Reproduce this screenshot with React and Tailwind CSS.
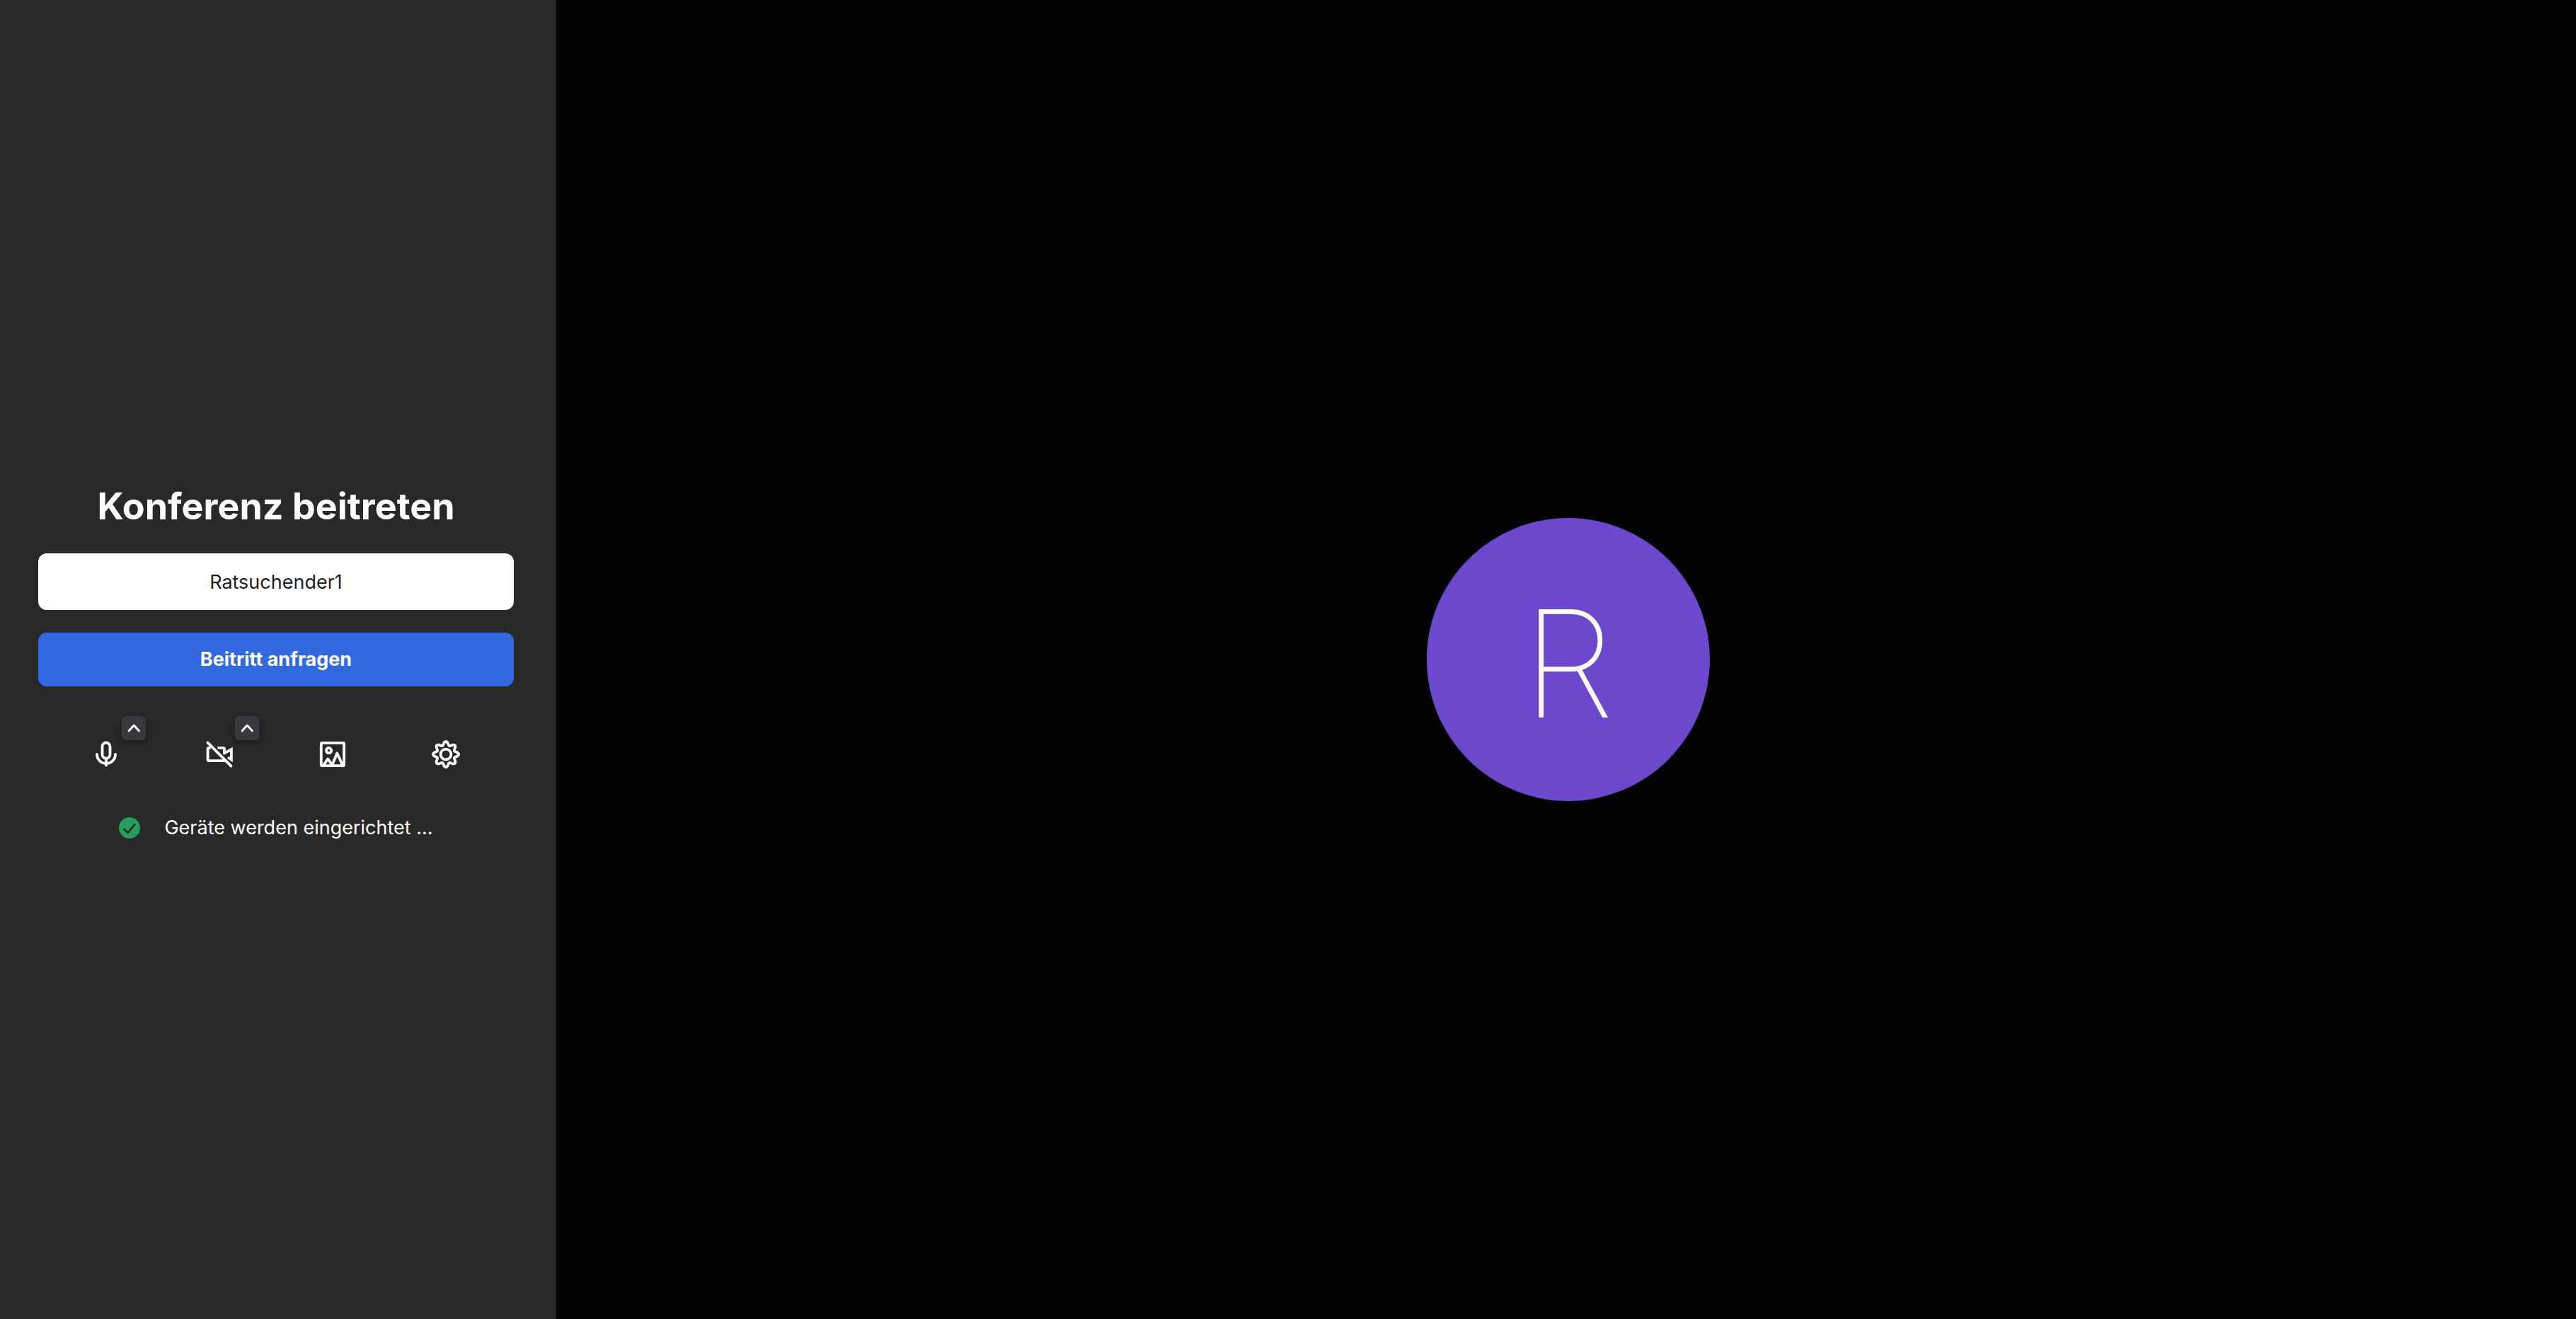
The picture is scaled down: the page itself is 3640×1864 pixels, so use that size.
const iconProps = {
  viewBox: '0 0 40 40',
  fill: 'none',
  stroke: 'currentColor',
  strokeWidth: 3.8,
  strokeLinecap: 'round',
  strokeLinejoin: 'round',
  className: 'size-10',
  'aria-hidden': true,
};

function MicIcon() {
  return (
    <svg {...iconProps}>
      <rect x="14.5" y="3.5" width="11" height="22.2" rx="5.5" />
      <path d="M7 20a13 13 0 0 0 26 0M20 26v9.5" />
    </svg>
  );
}

function CameraOffIcon() {
  return (
    <svg {...iconProps}>
      <path d="M6 10.9H5Q3.6 10.9 3.6 12.3V27.7Q3.6 29.1 5 29.1H25Q27 29.1 27.3 28" />
      <path d="M17.5 10.9H25.2Q27 10.9 27 12.5V18.4L36.9 13V27.6L32 24.2" strokeLinecap="butt" strokeLinejoin="miter" />
      <path d="M6.8 3L39.2 35.4" stroke="#292929" strokeWidth="2.6" strokeLinecap="butt" />
      <path d="M3.4 3.4L36.6 36.6" />
    </svg>
  );
}

function PictureIcon() {
  return (
    <svg {...iconProps}>
      <rect x="3.8" y="3.8" width="32.4" height="32.4" rx="1.4" />
      <circle cx="14.6" cy="14.6" r="3.6" />
      <path d="M7.5 35L13.2 26.5L19.5 35L26.3 18.5L34 35" />
    </svg>
  );
}

const gearPath =
  Array.from({ length: 144 }, (_, i) => {
    const angle = (i / 144) * Math.PI * 2;
    const radius = 15.5 + 2.6 * Math.cos(8 * angle);
    const x = (20 + radius * Math.cos(angle)).toFixed(2);
    const y = (20 + radius * Math.sin(angle)).toFixed(2);
    return `${i === 0 ? 'M' : 'L'}${x} ${y}`;
  }).join('') + 'Z';

function GearIcon() {
  return (
    <svg {...iconProps}>
      <path d={gearPath} />
      <circle cx="20" cy="20" r="7.4" />
    </svg>
  );
}

function ChevronUp() {
  return (
    <svg viewBox="0 0 34 34" className="size-full" fill="none" stroke="currentColor" strokeWidth="3" strokeLinecap="round" strokeLinejoin="round" aria-hidden="true">
      <path d="M10.2 20.8L17.3 13L24.4 20.8" />
    </svg>
  );
}

const controls = [
  { label: 'Mikrofon', Icon: MicIcon, menu: 'Audioeinstellungen' },
  { label: 'Kamera', Icon: CameraOffIcon, menu: 'Videoeinstellungen' },
  { label: 'Hintergrund', Icon: PictureIcon },
  { label: 'Einstellungen', Icon: GearIcon },
];

export default function App() {
  return (
    <div className="flex min-h-screen bg-[#030303] font-['Inter',sans-serif] text-white">
      <aside className="flex w-[786px] shrink-0 flex-col justify-center bg-[#292929] pt-2 pr-[60px] pl-[54px]">
        <h1 className="text-center text-[52px] leading-[68px] font-bold">Konferenz beitreten</h1>
        <form className="mt-8 flex flex-col gap-8" onSubmit={(e) => e.preventDefault()}>
          <input
            type="text"
            aria-label="Name"
            defaultValue="Ratsuchender1"
            className="h-20 w-full rounded-xl bg-white text-center text-[27px] text-[#1c2025] outline-none"
          />
          <button type="submit" className="h-[76px] w-full rounded-xl bg-[#3269e0] text-[27px] font-bold">
            Beitritt anfragen
          </button>
        </form>
        <div className="mx-4 mt-12 grid grid-cols-4">
          {controls.map(({ label, Icon, menu }) => (
            <div key={label} className="relative mx-auto">
              <button type="button" aria-label={label} className="flex size-24 items-center justify-center rounded-xl">
                <Icon />
              </button>
              {menu && (
                <button
                  type="button"
                  aria-label={menu}
                  className="absolute -top-1.5 -right-2 size-[34px] rounded-md bg-[#38393d] shadow-[0_4px_12px_rgba(0,0,0,0.35)]"
                >
                  <ChevronUp />
                </button>
              )}
            </div>
          ))}
        </div>
        <p className="mt-9 flex items-center justify-center gap-[34px] text-[27px] leading-10" role="status">
          <svg viewBox="0 0 30 30" className="size-[30px]" aria-hidden="true">
            <circle cx="15" cy="15" r="15" fill="#269f5c" />
            <path d="M7.4 17L12.8 21.8L22.4 10.2" fill="none" stroke="#292929" strokeWidth="2.8" strokeLinecap="round" strokeLinejoin="round" />
          </svg>
          Geräte werden eingerichtet ...
        </p>
      </aside>
      <main className="flex min-w-0 flex-1 items-center justify-center pl-1.5">
        <div className="flex size-[400px] items-center justify-center rounded-full bg-[#6c48cd] pt-2.5 text-[208px] leading-none font-thin [-webkit-text-stroke:2px_white]">
          R
        </div>
      </main>
    </div>
  );
}
